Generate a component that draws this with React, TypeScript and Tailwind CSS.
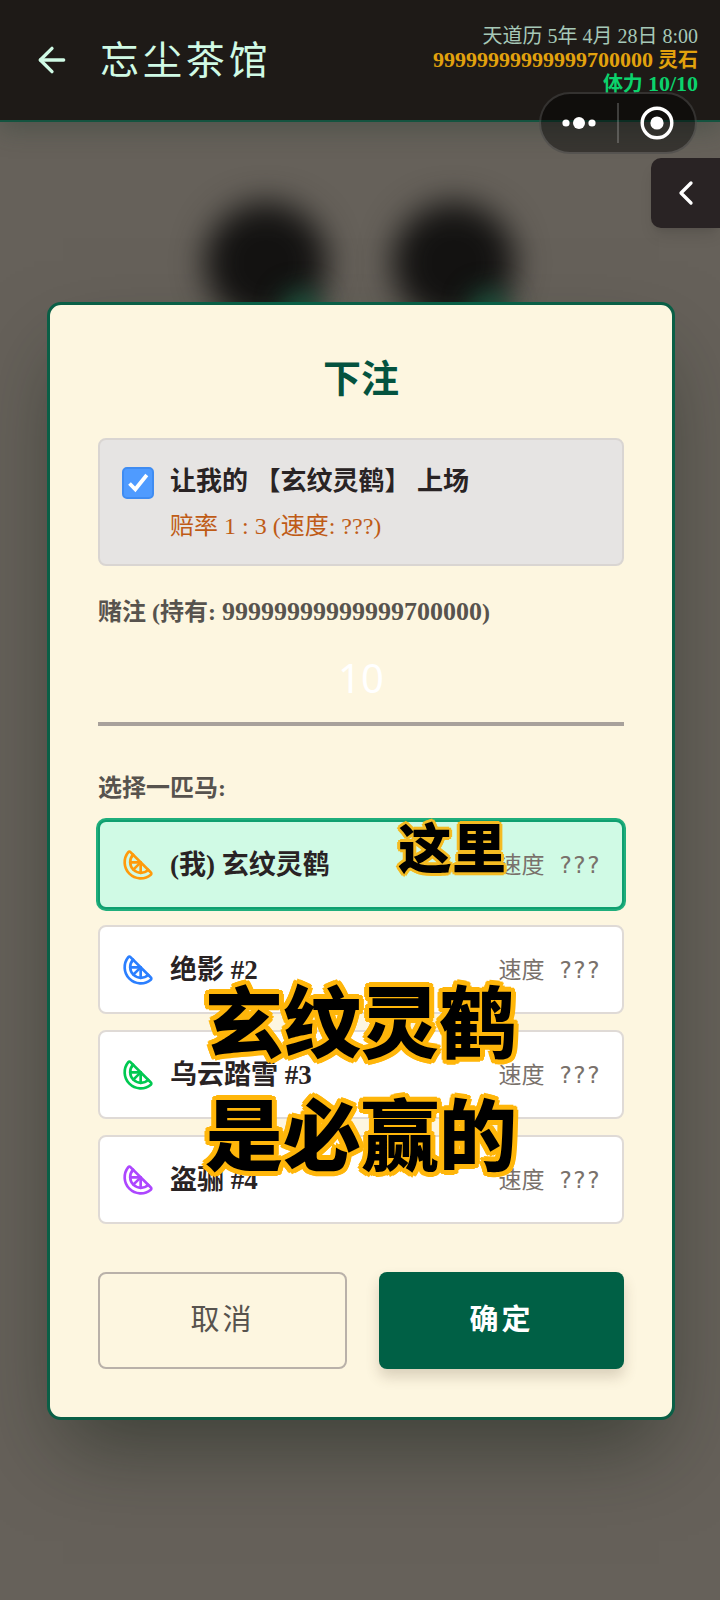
import { useState } from 'react'
import { ArrowLeft, ChevronLeft, Citrus } from 'lucide-react'
import { clsx } from 'clsx'

const horses = [
  { id: 'mine', name: '(我) 玄纹灵鹤', color: 'text-[#ff9a0a]' },
  { id: 'h2', name: '绝影 #2', color: 'text-blue-500' },
  { id: 'h3', name: '乌云踏雪 #3', color: 'text-green-500' },
  { id: 'h4', name: '盗骊 #4', color: 'text-purple-500' },
]

const stones = '99999999999999700000'

function Header() {
  return (
    <header className="relative flex items-center justify-between h-[122px] pl-8 pr-[22px] bg-[#1e1a17] border-b-2 border-[#14533f] shadow-[0_8px_24px_rgba(40,60,50,0.35)]">
      <div className="flex items-center gap-7 text-emerald-100">
        <button type="button" aria-label="返回">
          <ArrowLeft className="size-10" />
        </button>
        <h1 className="text-[39px] leading-none tracking-widest">忘尘茶馆</h1>
      </div>
      <div className="text-right text-xl leading-6 whitespace-nowrap self-start pt-6">
        <div className="text-[#a6c8b7]">天道历 5年 4月 28日 8:00</div>
        <div className="font-bold text-[#e2a20d]">
          <span className="text-[22px]">{stones}</span> 灵石
        </div>
        <div className="font-bold text-[#0bd26c]">
          体力 <span className="text-[22px]">10/10</span>
        </div>
      </div>
    </header>
  )
}

// Floating capsule of the host app
function Capsule() {
  return (
    <div className="absolute z-30 top-[92px] right-[23px] flex items-center w-[158px] h-[62px] rounded-full bg-black/45 border-2 border-white/15">
      <button type="button" aria-label="更多" className="flex-1 flex justify-center">
        <svg viewBox="0 0 36 14" className="w-9 h-3.5" fill="white">
          <circle cx="5" cy="7" r="3.6" />
          <circle cx="18" cy="7" r="6" />
          <circle cx="31" cy="7" r="3.6" />
        </svg>
      </button>
      <div className="w-0.5 h-10 bg-white/20" />
      <button type="button" aria-label="关闭" className="flex-1 flex justify-center">
        <svg viewBox="0 0 34 34" className="size-[34px]" fill="white">
          <circle cx="17" cy="17" r="14.8" fill="none" stroke="white" strokeWidth="3.4" />
          <circle cx="17" cy="17" r="6.6" />
        </svg>
      </button>
    </div>
  )
}

function Backdrop() {
  return (
    <div className="absolute inset-x-0 top-[52px] flex justify-center gap-[66px] pointer-events-none">
      {[0, 1].map((i) => (
        <div key={i} className="relative mt-7">
          <div className="size-[122px] rounded-full bg-[#141312] blur-[16px]" />
          <div className="absolute right-2 -bottom-1 size-9 rounded-full bg-[#12593f] blur-[14px]" />
        </div>
      ))}
    </div>
  )
}

function Caption({ className, children }: { className: string; children: React.ReactNode }) {
  return (
    <div
      className={clsx(
        "absolute z-20 font-black text-black text-center whitespace-nowrap pointer-events-none font-['Noto_Sans_CJK_SC',sans-serif]",
        className,
      )}
    >
      {children}
    </div>
  )
}

export default function App() {
  const [useMine, setUseMine] = useState(true)
  const [stake, setStake] = useState('10')
  const [selected, setSelected] = useState('mine')

  return (
    <div className="relative min-h-screen flex flex-col overflow-hidden bg-[#66615a] font-['Liberation_Serif','Noto_Sans_CJK_SC',serif]">
      <Header />
      <Capsule />

      {/* Side drawer handle */}
      <button
        type="button"
        aria-label="展开"
        className="absolute z-10 top-[158px] right-0 flex items-center justify-center w-[69px] h-[70px] rounded-l-[10px] bg-[#292324] text-white shadow-lg"
      >
        <ChevronLeft className="size-10" />
      </button>

      <main className="relative flex-1 flex items-center pl-[47px] pr-[45px]">
        <Backdrop />

        <section className="relative w-full p-12 rounded-[14px] border-[3px] border-[#0a5f46] bg-[#fdf6e0] shadow-[0_40px_80px_-16px_rgba(20,30,20,0.5)]">
          <h2 className="mb-[33px] text-center text-[38px] leading-[52px] font-bold text-[#04533f]">下注</h2>

          {/* Own entry */}
          <div className="flex gap-4 p-[22px] rounded-lg border-2 border-[#d9d5d2] bg-[#e6e4e3]">
            <span className="relative mt-[5px] size-8 shrink-0">
              <input
                id="use-mine"
                type="checkbox"
                checked={useMine}
                onChange={(e) => setUseMine(e.target.checked)}
                className="peer appearance-none block size-8 rounded-[5px] border-2 border-[#3f8cf2] checked:bg-[#4f9bff]"
              />
              <svg
                viewBox="0 0 32 32"
                className="absolute inset-0 size-8 pointer-events-none hidden peer-checked:block"
                fill="none"
                stroke="white"
                strokeWidth="3.8"
              >
                <path d="M7.5 16.5 13.3 22.3 24.8 8" />
              </svg>
            </span>
            <label htmlFor="use-mine" className="block">
              <span className="block text-[26px] leading-10 font-bold text-[#292324]">
                让我的 【玄纹灵鹤】 上场
              </span>
              <span className="block mt-2 text-2xl leading-8 text-[#bf5b16]">赔率 1 : 3 (速度: ???)</span>
            </label>
          </div>

          {/* Stake */}
          <label htmlFor="stake" className="block mt-7 text-2xl leading-9 font-bold text-[#57534e]">
            赌注 (持有: <span className="text-[26px]">{stones}</span>)
          </label>
          <input
            id="stake"
            type="text"
            inputMode="numeric"
            value={stake}
            onChange={(e) => setStake(e.target.value)}
            className="block w-full mt-1 py-5 bg-transparent border-b-4 border-[#a8a19b] text-center text-[40px] leading-[48px] text-white font-['Noto_Sans',sans-serif] outline-none"
          />

          <div className="mt-11 text-2xl leading-9 font-bold text-[#57534e]">选择一匹马:</div>
          <div className="relative mt-3.5 flex flex-col gap-4">
            {horses.map((horse) => (
              <button
                key={horse.id}
                type="button"
                aria-pressed={horse.id === selected}
                onClick={() => setSelected(horse.id)}
                className={clsx(
                  'flex items-center h-[89px] px-[22px] rounded-lg border-2',
                  horse.id === selected
                    ? 'bg-emerald-100 border-[#0f9f70] ring-2 ring-[#1fae7c]'
                    : 'bg-white border-[#dfdad6]',
                )}
              >
                <Citrus className={clsx('size-8 mr-4', horse.color)} />
                <span className="text-[27px] leading-9 font-bold text-[#292324]">{horse.name}</span>
                <span className="ml-auto text-[23px] leading-9 text-[#79716b] font-['DejaVu_Sans_Mono','Noto_Sans_CJK_SC',monospace]">
                  速度 ???
                </span>
              </button>
            ))}

            <Caption className="-top-2.5 left-[300px] text-[54px] leading-[72px] [text-shadow:3px_0_#f4bb22,-3px_0_#f4bb22,0_3px_#f4bb22,0_-3px_#f4bb22,2px_2px_#f4bb22,-2px_2px_#f4bb22,2px_-2px_#f4bb22,-2px_-2px_#f4bb22]">
              这里
            </Caption>
            <Caption className="top-[142px] inset-x-0 text-[78px] leading-[113px] [text-shadow:5px_0_#ffb60a,-5px_0_#ffb60a,0_5px_#ffb60a,0_-5px_#ffb60a,4px_3px_#ffb60a,-4px_3px_#ffb60a,4px_-3px_#ffb60a,-4px_-3px_#ffb60a,3px_4px_#ffb60a,-3px_4px_#ffb60a,3px_-4px_#ffb60a,-3px_-4px_#ffb60a,2px_0_#ffb60a,-2px_0_#ffb60a,0_2px_#ffb60a,0_-2px_#ffb60a]">
              玄纹灵鹤
              <br />
              是必赢的
            </Caption>
          </div>

          <div className="flex gap-8 mt-12">
            <button
              type="button"
              className="flex-1 h-[97px] rounded-lg border-2 border-[#b9b1a9] text-[29px] tracking-widest text-[#57534e]"
            >
              取消
            </button>
            <button
              type="button"
              className="flex-1 h-[97px] rounded-lg bg-emerald-800 text-[29px] tracking-widest font-bold text-white shadow-[0_8px_14px_rgba(80,60,40,0.2)]"
            >
              确定
            </button>
          </div>
        </section>
      </main>
    </div>
  )
}
